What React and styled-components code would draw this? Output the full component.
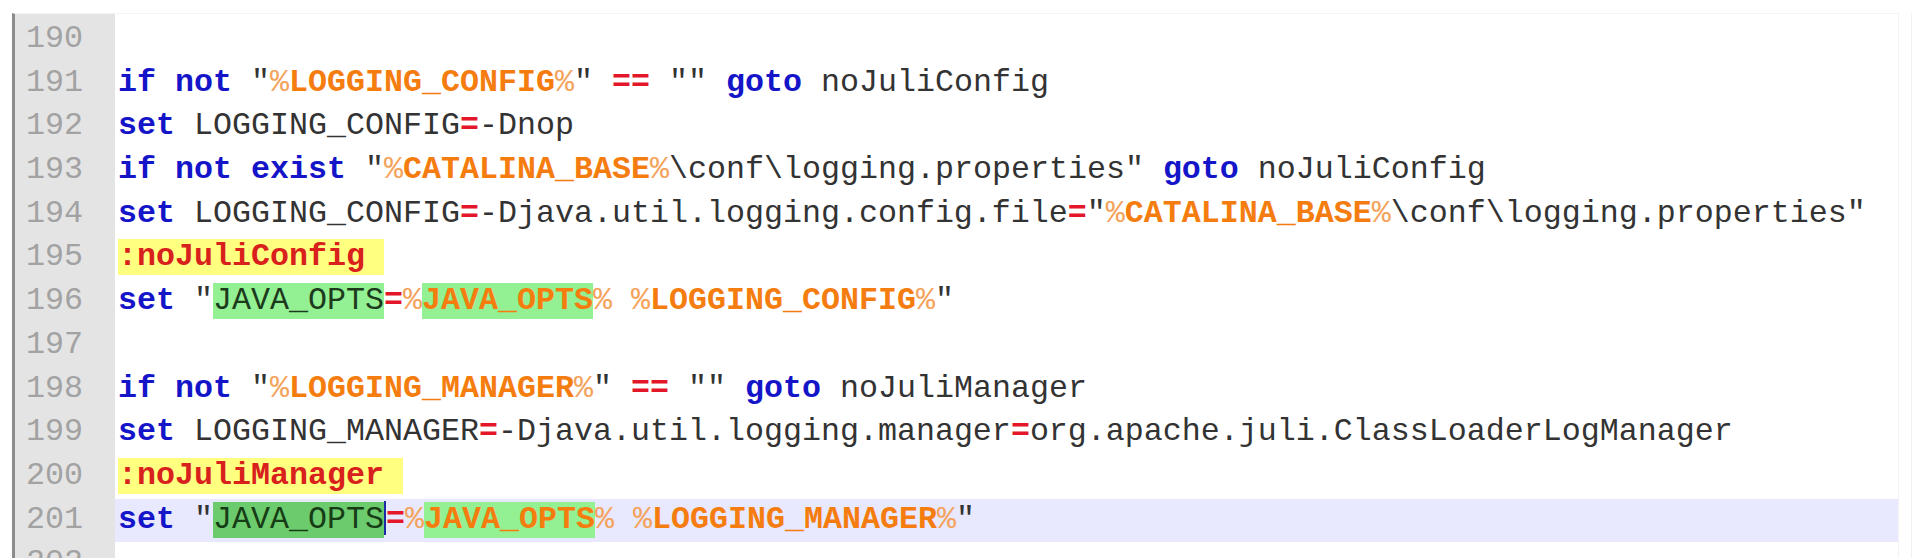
import React from "react";
import styled, { createGlobalStyle, css } from "styled-components";

const GlobalStyle = createGlobalStyle`
  html,
  body {
    margin: 0;
    padding: 0;
    background: #ffffff;
    overflow: hidden;
  }
`;

const Frame = styled.div`
  width: 1899px;
  height: 545px;
  margin: 13px 0 0 12px;

  border-right: 1px solid #f1f1f1;
  overflow: hidden;
`;

const Editor = styled.div`
  width: 1887px;
  height: 100%;
  padding-top: 4px;

  display: flex;
  flex-direction: column;

  border-left: 3px solid #8c8c8c;
  border-top: 1px solid #f4f4f4;
  border-right: 1px solid #f3f3f3;
  box-sizing: border-box;
  background: linear-gradient(#e4e4e4, #e4e4e4) 0 0 / 100px 100% no-repeat;

  font-family: "Liberation Mono", "Courier New", monospace;
  font-size: 31.66px;
`;

const Row = styled.div`
  height: 43.7px;
  flex: none;

  display: grid;
  grid-template-columns: 100px 1fr;
`;

const Number = styled.div`
  padding-left: 11px;

  background: #e4e4e4;
  color: #a2a2a2;
  line-height: 43.7px;
`;

const Code = styled.div`
  padding-left: 3px;

  line-height: 43.7px;
  white-space: pre;
  color: #333333;

  ${(props) =>
    props.$current &&
    css`
      background: #e8e8ff;
    `}
`;

const Tok = styled.span`
  ${(props) => props.$kind === "kw" && css`
    color: #1414c8;
    font-weight: bold;
  `}
  ${(props) => props.$kind === "var" && css`
    color: #f57d0f;
    font-weight: bold;
  `}
  ${(props) => props.$kind === "pct" && css`
    color: #f4a35c;
  `}
  ${(props) => props.$kind === "op" && css`
    color: #e4162a;
    font-weight: bold;
  `}
  ${(props) => props.$kind === "label" && css`
    color: #d8201c;
    font-weight: bold;
    background: #ffff80;
  `}
`;

const Mark = styled.span`
  background: ${(props) => (props.$selected ? "#6ccb6c" : "#93f193")};
  color: ${(props) => (props.$selected ? "#173d17" : "#1d3a1d")};
`;

const Caret = styled.span`
  display: inline-block;
  width: 0;
  height: 34px;
  vertical-align: -7px;
  border-left: 2px solid #1c2aa8;
`;

const Variable = ({ name, marked }) => (
  <>
    <Tok $kind="pct">%</Tok>
    {marked ? (
      <Mark>
        <Tok $kind="var">{name}</Tok>
      </Mark>
    ) : (
      <Tok $kind="var">{name}</Tok>
    )}
    <Tok $kind="pct">%</Tok>
  </>
);

const lines = [
  { n: 190, body: null },
  {
    n: 191,
    body: (
      <>
        <Tok $kind="kw">if</Tok> <Tok $kind="kw">not</Tok> "
        <Variable name="LOGGING_CONFIG" />" <Tok $kind="op">==</Tok> ""{" "}
        <Tok $kind="kw">goto</Tok> noJuliConfig
      </>
    ),
  },
  {
    n: 192,
    body: (
      <>
        <Tok $kind="kw">set</Tok> LOGGING_CONFIG<Tok $kind="op">=</Tok>-Dnop
      </>
    ),
  },
  {
    n: 193,
    body: (
      <>
        <Tok $kind="kw">if</Tok> <Tok $kind="kw">not</Tok>{" "}
        <Tok $kind="kw">exist</Tok> "<Variable name="CATALINA_BASE" />
        {'\\conf\\logging.properties" '}
        <Tok $kind="kw">goto</Tok> noJuliConfig
      </>
    ),
  },
  {
    n: 194,
    body: (
      <>
        <Tok $kind="kw">set</Tok> LOGGING_CONFIG<Tok $kind="op">=</Tok>
        -Djava.util.logging.config.file<Tok $kind="op">=</Tok>"
        <Variable name="CATALINA_BASE" />
        {'\\conf\\logging.properties"'}
      </>
    ),
  },
  {
    n: 195,
    body: <Tok $kind="label">:noJuliConfig </Tok>,
  },
  {
    n: 196,
    body: (
      <>
        <Tok $kind="kw">set</Tok> "<Mark>JAVA_OPTS</Mark>
        <Tok $kind="op">=</Tok>
        <Variable name="JAVA_OPTS" marked /> <Variable name="LOGGING_CONFIG" />"
      </>
    ),
  },
  { n: 197, body: null },
  {
    n: 198,
    body: (
      <>
        <Tok $kind="kw">if</Tok> <Tok $kind="kw">not</Tok> "
        <Variable name="LOGGING_MANAGER" />" <Tok $kind="op">==</Tok> ""{" "}
        <Tok $kind="kw">goto</Tok> noJuliManager
      </>
    ),
  },
  {
    n: 199,
    body: (
      <>
        <Tok $kind="kw">set</Tok> LOGGING_MANAGER<Tok $kind="op">=</Tok>
        -Djava.util.logging.manager<Tok $kind="op">=</Tok>
        org.apache.juli.ClassLoaderLogManager
      </>
    ),
  },
  {
    n: 200,
    body: <Tok $kind="label">:noJuliManager </Tok>,
  },
  {
    n: 201,
    current: true,
    body: (
      <>
        <Tok $kind="kw">set</Tok> "<Mark $selected>JAVA_OPTS</Mark>
        <Caret />
        <Tok $kind="op">=</Tok>
        <Variable name="JAVA_OPTS" marked /> <Variable name="LOGGING_MANAGER" />"
      </>
    ),
  },
  { n: 202, body: null },
];

function App() {
  return (
    <>
      <GlobalStyle />
      <Frame>
        <Editor>
          {lines.map((line) => (
            <Row key={line.n}>
              <Number>{line.n}</Number>
              <Code $current={line.current}>{line.body}</Code>
            </Row>
          ))}
        </Editor>
      </Frame>
    </>
  );
}

export default App;
